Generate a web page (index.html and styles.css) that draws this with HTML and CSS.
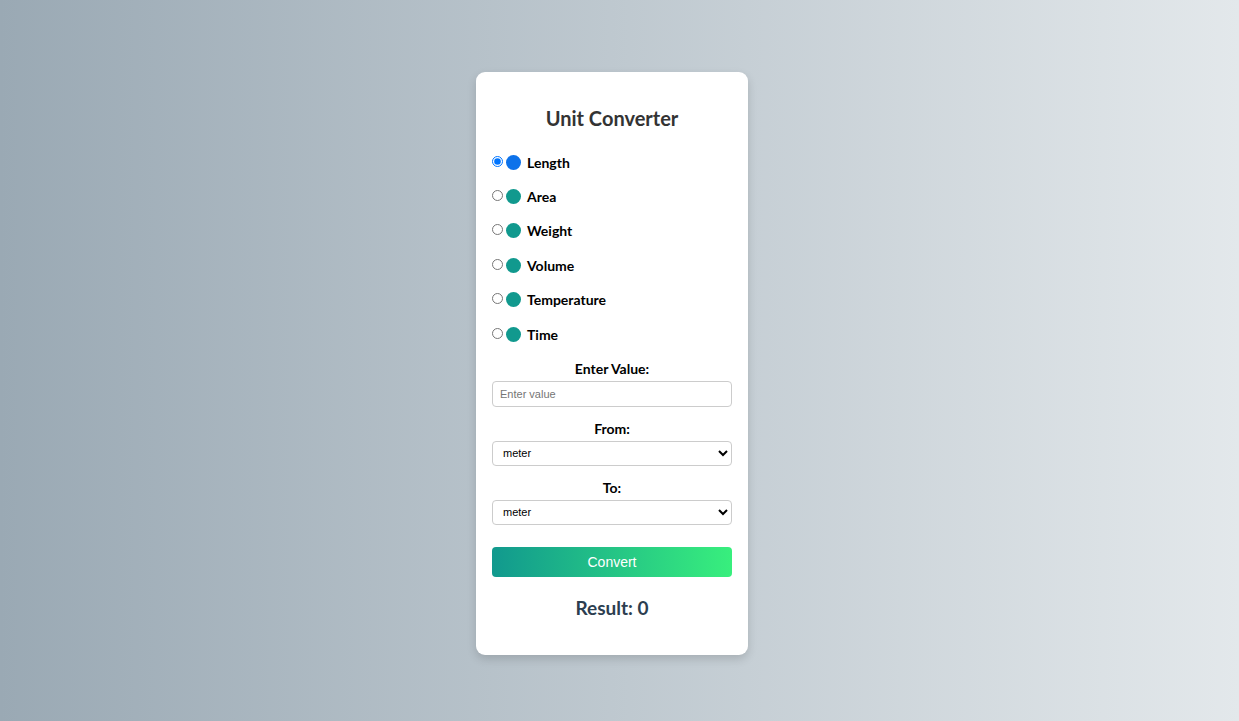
FILE: index.html
```html
<!DOCTYPE html>
<html lang="en">
<head>
<meta charset="utf-8">
<title>Unit Converter</title>
<link rel="stylesheet" href="styles.css">
</head>
<body>
<div class="card">
  <h2 class="title">Unit Converter</h2>
  <div class="types">
    <label class="type"><input type="radio" name="type" checked><span class="dot dot-active"></span><span class="type-name">Length</span></label>
    <label class="type"><input type="radio" name="type"><span class="dot"></span><span class="type-name">Area</span></label>
    <label class="type"><input type="radio" name="type"><span class="dot"></span><span class="type-name">Weight</span></label>
    <label class="type"><input type="radio" name="type"><span class="dot"></span><span class="type-name">Volume</span></label>
    <label class="type"><input type="radio" name="type"><span class="dot"></span><span class="type-name">Temperature</span></label>
    <label class="type"><input type="radio" name="type"><span class="dot"></span><span class="type-name">Time</span></label>
  </div>
  <div class="field">
    <label class="field-label">Enter Value:</label>
    <input class="control" type="text" placeholder="Enter value">
  </div>
  <div class="field">
    <label class="field-label">From:</label>
    <select class="control select"><option>meter</option></select>
  </div>
  <div class="field">
    <label class="field-label">To:</label>
    <select class="control select"><option>meter</option></select>
  </div>
  <button class="convert">Convert</button>
  <div class="result">Result: 0</div>
</div>
</body>
</html>
```

FILE: styles.css
```css
html, body {
  margin: 0;
  height: 100%;
}
body {
  background: linear-gradient(to right, #9aa9b4, #e3e8eb);
  display: flex;
  justify-content: center;
  align-items: flex-start;
  padding: 72px 15px 0 0;
  box-sizing: border-box;
  font-family: Lato, "Open Sans", sans-serif;
}
.card {
  width: 240px;
  background: #fff;
  border-radius: 9px;
  padding: 20px 16px 35px;
  box-shadow: 0 4px 10px rgba(0, 0, 0, 0.15);
}
.title {
  margin: 13px 0 14px;
  font-size: 20px;
  line-height: 26px;
  text-align: center;
  color: #333;
  font-weight: 700;
}
.types {
  display: flex;
  flex-direction: column;
  margin-bottom: 7.6px;
}
.type {
  display: flex;
  align-items: center;
  height: 34.4px;
  cursor: pointer;
}
.type input {
  width: 11px;
  height: 11px;
  margin: 0 3px 2px 0;
}
.dot {
  width: 15px;
  height: 15px;
  border-radius: 50%;
  background: #11998e;
  margin-right: 6px;
}
.dot-active {
  background: #0d72ea;
}
.type-name {
  font-size: 14px;
  font-weight: 700;
  color: #000;
}
.field {
  display: flex;
  flex-direction: column;
  gap: 2px;
  margin-bottom: 12px;
}
.field-label {
  font-size: 14px;
  line-height: 20px;
  font-weight: 700;
  text-align: center;
  color: #000;
}
.control {
  box-sizing: border-box;
  width: 100%;
  height: 26px;
  border: 1px solid #ccc;
  border-radius: 4px;
  padding: 0 7px;
  font-family: "Liberation Sans", Arial, sans-serif;
  font-size: 11px;
  color: #000;
  background: #fff;
}
.control::placeholder {
  color: #757575;
}
.select {
  height: 25px;
  padding: 0 4px 0 6px;
}
.convert {
  display: block;
  width: 100%;
  height: 30px;
  margin-top: 22px;
  border: none;
  border-radius: 4px;
  background: linear-gradient(to right, #11998e, #38ef7d);
  color: #fff;
  font-family: "Liberation Sans", Arial, sans-serif;
  font-size: 14px;
  cursor: pointer;
}
.result {
  margin-top: 18px;
  font-size: 19px;
  line-height: 25px;
  font-weight: 700;
  text-align: center;
  color: #2c3e50;
}
```
